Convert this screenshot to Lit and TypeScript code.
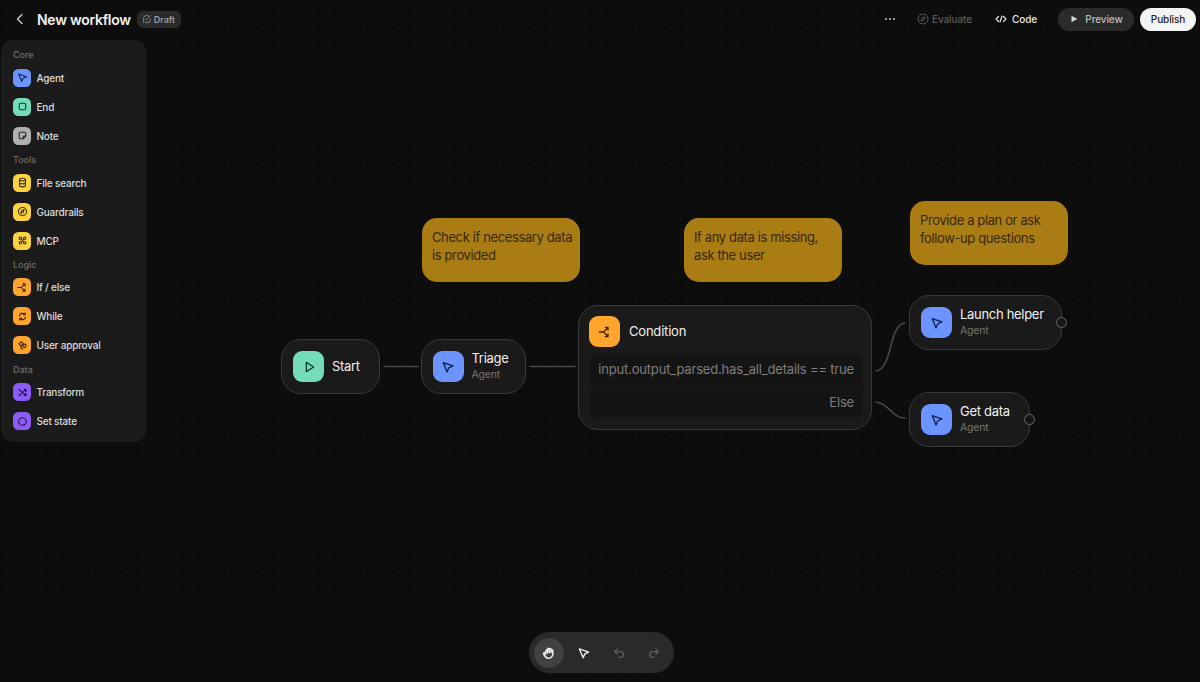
import { LitElement, html, css, svg } from "lit";
import { customElement } from "lit/decorators.js";

const ICONS: Record<string, unknown> = {
  agent: svg`<path d="M5 5.500 19.500 10.500 13.200 13.200 10.500 19.500Z"/>`,
  end: svg`<rect x="6" y="6" width="12" height="12" rx="3"/>`,
  note: svg`<path d="M6 8a2 2 0 0 1 2-2h8a2 2 0 0 1 2 2v5l-5 5H8a2 2 0 0 1-2-2Z"/><path d="M18 13h-3a2 2 0 0 0-2 2v3"/>`,
  file: svg`<ellipse cx="12" cy="6.500" rx="5.500" ry="2.500"/><path d="M6.500 6.500v11c0 1.400 2.500 2.500 5.500 2.500s5.500-1.100 5.500-2.500v-11M6.500 12c0 1.400 2.500 2.500 5.500 2.500s5.500-1.100 5.500-2.500"/>`,
  guard: svg`<circle cx="12" cy="12" r="7.500"/><path d="M15 9l-1.500 4.500L9 15l1.500-4.500Z"/>`,
  mcp: svg`<circle cx="8" cy="8" r="2.300"/><circle cx="16" cy="8" r="2.300"/><circle cx="8" cy="16" r="2.300"/><circle cx="16" cy="16" r="2.300"/><path d="M9.800 9.800l4.400 4.400M14.200 9.800l-4.400 4.400"/>`,
  branch: svg`<path d="M3.500 12h6.500l6-6.500M10 12l6 6.500M12.500 5h4v4M12.500 19h4v-4"/>`,
  loop: svg`<path d="M6.500 11a5.700 5.700 0 0 1 10-3M17.500 13a5.700 5.700 0 0 1-10 3"/><path d="M17 5v3.500h-3.500M7 19v-3.500h3.500"/>`,
  approval: svg`<path d="M9.500 5l4 4-4 4-4-4Z"/><circle cx="15.500" cy="12.500" r="3"/><path d="M9.500 13v4.500l3 1.500"/>`,
  transform: svg`<path d="M5.500 6.500l13 11M5.500 17.500l4.500-4M14 10l4.500-3.500M15 6.500h3.500V10M15 17.500h3.500V14"/>`,
  state: svg`<circle cx="12" cy="12" r="7" stroke-dasharray="3.200 2.300"/>`,
  play: svg`<path d="M8 5v14l11-7Z"/>`,
};

const icon = (name: string) =>
  html`<svg viewBox="0 0 24 24" fill="none" stroke="currentColor" stroke-width="2" stroke-linecap="round" stroke-linejoin="round">${ICONS[name]}</svg>`;

const PALETTE = [
  { title: "Core", items: [["Agent", "agent", "blue"], ["End", "end", "green"], ["Note", "note", "grey"]] },
  { title: "Tools", items: [["File search", "file", "yellow"], ["Guardrails", "guard", "yellow"], ["MCP", "mcp", "yellow"]] },
  { title: "Logic", items: [["If / else", "branch", "orange"], ["While", "loop", "orange"], ["User approval", "approval", "orange"]] },
  { title: "Data", items: [["Transform", "transform", "purple"], ["Set state", "state", "purple"]] },
];

const NODES = [
  { x: 281, y: 339, w: 99, h: 55, name: "Start", sub: "", ic: "play", col: "green", handle: false },
  { x: 420.5, y: 339, w: 105.5, h: 55, name: "Triage", sub: "Agent", ic: "agent", col: "blue", handle: false },
  { x: 909, y: 295, w: 153, h: 55, name: "Launch helper", sub: "Agent", ic: "agent", col: "blue", handle: true },
  { x: 909, y: 392, w: 121, h: 55, name: "Get data", sub: "Agent", ic: "agent", col: "blue", handle: true },
];

const NOTES = [
  { x: 422, y: 218, text: "Check if necessary data is provided" },
  { x: 684, y: 218, text: "If any data is missing, ask the user" },
  { x: 910, y: 201, text: "Provide a plan or ask follow-up questions" },
];

@customElement("app-root")
export class AppRoot extends LitElement {
  static styles = css`
    :host {
      display: block;
      position: relative;
      width: 100%;
      height: 100vh;
      min-height: 682px;
      overflow: hidden;
      color: #ececec;
      font-family: Inter, "Noto Sans", sans-serif;
      background-color: #0d0d0d;
      background-image: radial-gradient(circle at center, #242424 0.8px, transparent 1px);
      background-size: 17px 17px;
      background-position: -1.500px 2.500px;
    }
    svg { display: block; }

    .topbar {
      position: relative;
      z-index: 2;
      height: 38px;
      display: flex;
      align-items: center;
      padding: 0 4px 0 14px;
    }
    .back { width: 12px; height: 12px; color: #d0d0d0; margin-right: 11px; }
    .title { font-size: 14px; font-weight: 600; letter-spacing: -0.27px; color: #f2f2f2; }
    .badge {
      margin-left: 6px;
      height: 17px;
      display: flex;
      align-items: center;
      gap: 2px;
      padding: 0 6px 0 5px;
      border-radius: 6px;
      background: #2a2a2a;
      color: #a6a6a6;
      font-size: 9px;
      font-weight: 500;
    }
    .badge svg { width: 10px; height: 10px; }
    .spacer { flex: 1; }
    .more { width: 12px; height: 12px; color: #c8c8c8; margin-right: 21px; }
    .action {
      display: flex;
      align-items: center;
      gap: 3px;
      font-size: 10px;
      font-weight: 500;
      letter-spacing: -0.1px;
      color: #e8e8e8;
    }
    .action svg { width: 12px; height: 12px; }
    .action.dim { color: #5c5c5c; margin-right: 23px; }
    .action.code { margin-right: 21px; gap: 5px; }
    .pill {
      height: 23px;
      display: flex;
      align-items: center;
      justify-content: center;
      border-radius: 12px;
      font-size: 10px;
      font-weight: 500;
      letter-spacing: -0.1px;
    }
    .pill.preview { width: 76px; background: #2b2b2b; color: #bdbdbd; gap: 6px; margin-right: 6px; }
    .pill.preview svg { width: 10px; height: 10px; color: #d8d8d8; }
    .pill.publish { width: 56px; background: #f3f3f3; color: #1c1c1c; }

    .palette {
      position: absolute;
      left: 1px;
      top: 40px;
      width: 145px;
      box-sizing: border-box;
      padding: 5.500px 12px 6.500px;
      border-radius: 12px;
      background: #1b1b1b;
      z-index: 2;
    }
    .section {
      height: 17.750px;
      box-sizing: border-box;
      padding-top: 1px;
      display: flex;
      align-items: center;
      font-size: 9px;
      font-weight: 500;
      color: #6f6f6f;
    }
    .row {
      height: 29px;
      display: flex;
      align-items: center;
      gap: 5.500px;
      font-size: 10px;
      font-weight: 500;
      letter-spacing: -0.2px;
      color: #dcdcdc;
    }
    .chip {
      width: 18px;
      height: 18px;
      flex: none;
      border-radius: 5.500px;
      display: flex;
      align-items: center;
      justify-content: center;
    }
    .chip svg { width: 13px; height: 13px; }
    .big {
      width: 31px;
      height: 31px;
      border-radius: 9px;
    }
    .big svg { width: 16px; height: 16px; }
    .blue { background: #6c94ff; color: #13224d; }
    .green { background: #74dcb8; color: #11392c; }
    .grey { background: #b0b0b0; color: #272727; }
    .yellow { background: #fdd23f; color: #3f3206; }
    .orange { background: #ffa52e; color: #3d2503; }
    .purple { background: #8b5cf6; color: #22114d; }

    .links {
      position: absolute;
      inset: 0;
      width: 100%;
      height: 100%;
      pointer-events: none;
    }
    .node {
      position: absolute;
      box-sizing: border-box;
      display: flex;
      align-items: center;
      gap: 8px;
      padding-left: 11px;
      background: #1a1a1a;
      border: 1px solid #3a3a3a;
      border-radius: 20px;
    }
    .node .text.two { margin-top: -2px; }
    .node .name { font-size: 13px; line-height: 17px; letter-spacing: -0.3px; color: #f0f0f0; white-space: nowrap; }
    .node .sub { font-size: 10.500px; line-height: 15px; letter-spacing: -0.2px; color: #767676; }
    .handle {
      position: absolute;
      right: -6px;
      top: 50%;
      width: 9px;
      height: 9px;
      margin-top: -5.500px;
      border: 1px solid #6a6a6a;
      border-radius: 50%;
      background: #161616;
    }
    .note {
      position: absolute;
      box-sizing: border-box;
      width: 158px;
      height: 64px;
      padding: 10px 2px 10px 10px;
      border-radius: 15px;
      background: #a97c14;
      color: #38290a;
      font-size: 13px;
      letter-spacing: -0.38px;
      line-height: 18px;
    }
    .cond {
      position: absolute;
      left: 578px;
      top: 305px;
      width: 294px;
      height: 125px;
      box-sizing: border-box;
      padding: 10px 8px 10px 10px;
      display: flex;
      flex-direction: column;
      background: #1a1a1a;
      border: 1px solid #3a3a3a;
      border-radius: 20px;
    }
    .cond-head {
      display: flex;
      align-items: center;
      gap: 9px;
      font-size: 13px;
      letter-spacing: -0.2px;
      color: #f0f0f0;
      margin-bottom: 7px;
    }
    .cond-head span:last-child { margin-top: -2px; }
    .cond-rows {
      background: #141414;
      border-radius: 8px;
      font-size: 13px;
      letter-spacing: -0.18px;
      color: #7e7e7e;
      display: flex;
      flex-direction: column;
    }
    .cond-row {
      height: 32px;
      padding: 0 9px 2px;
      box-sizing: border-box;
      display: flex;
      align-items: center;
      justify-content: flex-end;
      white-space: nowrap;
    }
    .cond-row + .cond-row { border-top: 1px solid #1c1c1c; }

    .tools {
      position: absolute;
      left: 529px;
      top: 632px;
      width: 145px;
      height: 41px;
      box-sizing: border-box;
      padding: 0 5px;
      display: flex;
      align-items: center;
      gap: 5px;
      border-radius: 21px;
      background: #2a2a2a;
    }
    .tool {
      width: 30px;
      height: 30px;
      flex: none;
      display: flex;
      align-items: center;
      justify-content: center;
      border-radius: 50%;
      color: #f0f0f0;
    }
    .tool svg { width: 14px; height: 14px; }
    .tool.on { background: #414141; }
    .tool.off { color: #5f5f5f; }
  `;

  render() {
    return html`
      <header class="topbar">
        <svg class="back" viewBox="0 0 12 12" fill="none" stroke="currentColor" stroke-width="1.300" stroke-linecap="round" stroke-linejoin="round"><path d="M8 1.500 3.500 6 8 10.500"/></svg>
        <span class="title">New workflow</span>
        <span class="badge">
          <svg viewBox="0 0 12 12" fill="none" stroke="currentColor" stroke-width="1" stroke-linecap="round" stroke-linejoin="round" stroke-dasharray="1.500 1"><path d="M2 10V5a3 3 0 0 1 3-3h2M10 6v2a2 2 0 0 1-2 2H4"/><path stroke-dasharray="none" d="M5 7l5-5"/></svg>
          Draft
        </span>
        <span class="spacer"></span>
        <svg class="more" viewBox="0 0 12 12" fill="currentColor"><circle cx="2" cy="6" r="1"/><circle cx="6" cy="6" r="1"/><circle cx="10" cy="6" r="1"/></svg>
        <span class="action dim">
          <svg viewBox="0 0 24 24" fill="none" stroke="currentColor" stroke-width="2" stroke-linejoin="round"><circle cx="12" cy="12" r="10"/><path d="M16 8l-2 6-6 2 2-6Z"/></svg>
          Evaluate
        </span>
        <span class="action code">
          <svg viewBox="0 0 24 24" fill="none" stroke="currentColor" stroke-width="2.400" stroke-linecap="round" stroke-linejoin="round"><path d="M7 7l-5 5 5 5M17 7l5 5-5 5M14 6l-4 12"/></svg>
          Code
        </span>
        <span class="pill preview">
          <svg viewBox="0 0 12 12" fill="currentColor"><path d="M3 2v8l7-4Z"/></svg>
          Preview
        </span>
        <span class="pill publish">Publish</span>
      </header>

      <svg class="links" viewBox="0 0 1200 682" fill="none" stroke="#4a4a4a" stroke-width="1.500" stroke-linecap="round">
        <path d="M384 366.500H418"/>
        <path d="M530 366.500H575"/>
        <path d="M876 371C893 369 888 325 905 323"/>
        <path d="M876 402C889 403 892 418 905 418"/>
      </svg>

      ${NOTES.map(
        (n) => html`<div class="note" style="left:${n.x}px;top:${n.y}px">${n.text}</div>`
      )}

      ${NODES.map(
        (n) => html`
          <div class="node" style="left:${n.x}px;top:${n.y}px;width:${n.w}px;height:${n.h}px">
            <span class="chip big ${n.col}">${icon(n.ic)}</span>
            <div class="text ${n.sub ? "two" : ""}">
              <div class="name">${n.name}</div>
              ${n.sub ? html`<div class="sub">${n.sub}</div>` : ""}
            </div>
            ${n.handle ? html`<span class="handle"></span>` : ""}
          </div>
        `
      )}

      <div class="cond">
        <div class="cond-head">
          <span class="chip big orange">${icon("branch")}</span>
          <span>Condition</span>
        </div>
        <div class="cond-rows">
          <div class="cond-row">input.output_parsed.has_all_details == true</div>
          <div class="cond-row">Else</div>
        </div>
      </div>

      <aside class="palette">
        ${PALETTE.map(
          (s) => html`
            <div class="section">${s.title}</div>
            ${s.items.map(
              ([label, ic, col]) => html`
                <div class="row"><span class="chip ${col}">${icon(ic)}</span>${label}</div>
              `
            )}
          `
        )}
      </aside>

      <div class="tools">
        <span class="tool on">
          <svg viewBox="0 0 24 24" fill="none" stroke="currentColor" stroke-width="2.600" stroke-linecap="round" stroke-linejoin="round"><path d="M6.500 12V8.500a1.500 1.500 0 0 1 3 0V12m0-1V5.500a1.500 1.500 0 0 1 3 0V11m0-.500V6a1.500 1.500 0 0 1 3 0v5m0-3a1.500 1.500 0 0 1 3 0v6a7 7 0 0 1-7 7h-1c-2.500 0-4-1.500-5-3l-2.500-4a1.500 1.500 0 0 1 2.500-1.700L6.500 14"/></svg>
        </span>
        <span class="tool">
          <svg viewBox="0 0 24 24" fill="none" stroke="currentColor" stroke-width="2.400" stroke-linejoin="round"><path d="M4 5 20 10.500 13.500 13.500 10.500 20Z"/></svg>
        </span>
        <span class="tool off">
          <svg viewBox="0 0 24 24" fill="none" stroke="currentColor" stroke-width="2.200" stroke-linecap="round" stroke-linejoin="round"><path d="M9 5 4.500 9.500 9 14"/><path d="M5 9.500h9.500a5 5 0 0 1 0 10H11"/></svg>
        </span>
        <span class="tool off">
          <svg viewBox="0 0 24 24" fill="none" stroke="currentColor" stroke-width="2.200" stroke-linecap="round" stroke-linejoin="round"><path d="M15 5l4.500 4.500L15 14"/><path d="M19 9.500H9.500a5 5 0 0 0 0 10H13"/></svg>
        </span>
      </div>
    `;
  }
}
